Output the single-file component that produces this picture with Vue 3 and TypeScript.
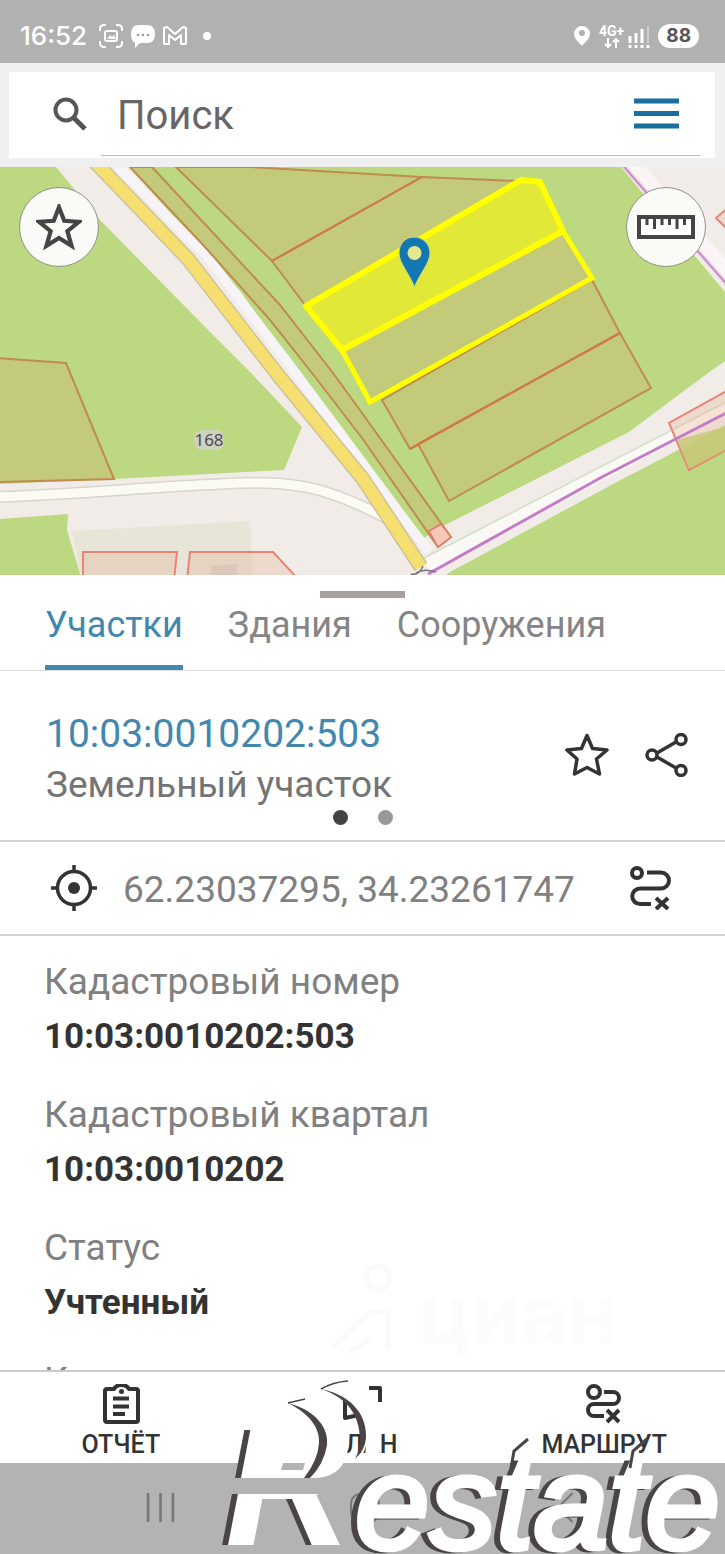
<script setup lang="ts">
import { ref } from 'vue'

interface Field {
  label: string
  value: string
}

const tabs: string[] = ['Участки', 'Здания', 'Сооружения']
const activeTab = ref(0)
const query = ref('')

const fields: Field[] = [
  { label: 'Кадастровый номер', value: '10:03:0010202:503' },
  { label: 'Кадастровый квартал', value: '10:03:0010202' },
  { label: 'Статус', value: 'Учтенный' },
  { label: 'Категория земель', value: '' },
]

const parcels: string[] = [
  '130,167 205,247 270,320 312,373 362,438 438,547 451,537 362,413 333,373 280,305 152,167',
  '176,167 272,261 422,177 250,167',
  '272,261 305,305 517,181 422,177',
  '382,400 410,449 620,333 592,280',
  '418,444 449,501 651,388 620,333',
  '-4,358 66,363 114,479 -4,482',
]

const redParcels: string[] = [
  '83,580 83,552 177,552 174,580',
  '187,580 190,552 273,552 299,580',
  '730,389 669,423 689,470 730,448',
  '730,206 716,218 730,232',
]
</script>

<template>
  <div class="screen">
    <header class="status">
      <div class="status-side">
        <span class="clock">16:52</span>
        <svg class="s24" viewBox="0 0 24 24" aria-hidden="true">
          <path d="M1 7V5q0-4 4-4h2M17 1h2q4 0 4 4v2M23 17v2q0 4-4 4h-2M7 23H5q-4 0-4-4v-2" fill="none" stroke="#fff" stroke-width="2" />
          <rect x="6" y="7" width="12" height="10" rx="2" fill="none" stroke="#fff" stroke-width="2" />
          <path d="M8 15l3-4 2 2 2-2 2 4z" fill="#fff" />
        </svg>
        <svg class="s24" viewBox="0 0 24 24" aria-hidden="true">
          <path d="M8 1h8q8 0 8 9t-8 9h-7l-5 5v-5q-4-2-4-9 0-9 8-9z" fill="#fff" />
          <g fill="#999"><circle cx="7" cy="11" r="1.300" /><circle cx="12" cy="11" r="1.300" /><circle cx="17" cy="11" r="1.300" /></g>
        </svg>
        <svg class="s24" viewBox="0 0 24 24" aria-hidden="true">
          <path d="M1 20V4l3-1 8 7 8-7 3 1v16h-5v-9l-6 5-6-5v9z" fill="none" stroke="#fff" stroke-width="2" stroke-linejoin="round" />
        </svg>
        <i class="more-dot"></i>
      </div>
      <div class="status-side status-right">
        <svg class="loc" viewBox="0 0 18 22" aria-hidden="true">
          <path d="M9 1a8 8 0 0 1 8 8c0 5-5 8-8 12C6 17 1 14 1 9a8 8 0 0 1 8-8z" fill="#fff" />
          <circle cx="9" cy="8" r="3" fill="#b1b1b1" />
        </svg>
        <span class="net">
          <b>4G+</b>
          <svg viewBox="0 0 16 10" aria-hidden="true"><path d="M4 0v9M1 6l3 3 3-3M12 10V1M9 4l3-3 3 3" fill="none" stroke="#fff" stroke-width="2" /></svg>
        </span>
        <svg class="bars" viewBox="0 0 22 24" aria-hidden="true">
          <path d="M2 12v7M8 9v10M14 5v14M2 21v3M8 21v3M14 21v3M20 21v3" stroke="#fff" stroke-width="3" />
          <path d="M20 2v17" stroke="#cfcfcf" stroke-width="2" />
        </svg>
        <span class="battery">88</span>
      </div>
    </header>

    <div class="search-wrap">
      <form class="search" role="search" @submit.prevent>
        <svg class="magnifier" viewBox="0 0 34 34" aria-hidden="true">
          <circle cx="13" cy="13" r="10.500" fill="none" stroke="#555" stroke-width="4" />
          <path d="M20.500 20.500L32 32" stroke="#555" stroke-width="5" />
        </svg>
        <div class="field-line">
          <input v-model="query" type="text" placeholder="Поиск" aria-label="Поиск" />
          <button type="button" class="plain" aria-label="Меню">
            <svg class="burger" viewBox="0 0 45 32" aria-hidden="true"><path d="M0 3h45M0 15.500h45M0 28h45" stroke="#1b6f9f" stroke-width="5" /></svg>
          </button>
        </div>
      </form>
    </div>

    <section class="map" aria-label="Карта">
      <svg class="map-canvas" viewBox="0 167 725 408" preserveAspectRatio="xMidYMid slice" aria-hidden="true">
        <rect x="-50" y="100" width="900" height="560" fill="#bcd981" />
        <path d="M0 484L115 479 284 470 302 427 253 375 213 335 100 220 56 167H129L205 251 240 291 300 375 362 458 424 538 445 525 629 432 712 370 730 358V423L615 483 450 572 440 580H82L67 530 68 514 0 519z" fill="#f1ece8" />
        <path d="M615 160L730 298V160z" fill="#f1ece8" />
        <path d="M72 531L250 521 253 580H82z" fill="#e7e4d8" />

        <path d="M424 558L730 400V412L429 574z" fill="#fbf9f6" />
        <path d="M424 558L730 400" stroke="#d2dec7" stroke-width="1.500" />
        <path d="M631 160L730 274" stroke="#fbf5f7" stroke-width="13" />
        <path d="M618 160L730 288" stroke="#ecc9e6" stroke-width="4" />
        <path d="M618 160L730 288" stroke="#bf85c4" stroke-width="1.500" />

        <path d="M-5 497C80 494 150 487 220 484C290 480 325 484 395 523" fill="none" stroke="#d8d5cd" stroke-width="12" />
        <path d="M-5 497C80 494 150 487 220 484C290 480 325 484 395 523" fill="none" stroke="#fcfbf3" stroke-width="9" />
        <path d="M118 167L206 255 290 365 429 552" fill="none" stroke="#f6f4f6" stroke-width="9" />
        <path d="M95 162L188 259 278 375 363 479 421 567" fill="none" stroke="#cfc29a" stroke-width="15" />
        <path d="M95 162L188 259 278 375 363 479 421 567" fill="none" stroke="#f5df70" stroke-width="12" />

        <g fill="#c3ca79" stroke="#c08a50" stroke-width="2">
          <polygon v-for="points in parcels" :key="points" :points="points" />
        </g>
        <path d="M272 261L422 177M410 449L620 333" stroke="#cf7a45" stroke-width="2" />
        <g fill="#e8a07c" fill-opacity="0.250" stroke="#e88474" stroke-width="2">
          <polygon v-for="points in redParcels" :key="points" :points="points" />
        </g>
        <path d="M677 440L689 469 728 449V426z" fill="#c5c876" fill-opacity="0.800" />
        <path d="M429 531L438 547 451 537 441 524z" fill="#f5c8ba" stroke="#e0776a" stroke-width="1.500" />
        <path d="M211 566l26-2v14h-26z" fill="#dcc7bb" />

        <polygon points="342,350 370,402 592,278 563,231" fill="#c3cb7b" stroke="#ff0" stroke-width="5" />
        <polygon points="306,306 521,180 540,182 563,231 342,350" fill="#e2e838" stroke="#ff0" stroke-width="6" stroke-linejoin="round" />

        <path d="M428 574L602 477 730 411" fill="none" stroke="#c37dc4" stroke-width="3" />
        <path d="M411 574q8 2 12-8M416 573q8-5 20-1" fill="none" stroke="#777" stroke-width="1.500" />

        <rect x="194" y="430" width="30" height="20" rx="8" fill="#cdd3bd" />
        <text x="209" y="446" class="house">168</text>

        <path d="M414 237c9 0 16 7 16 16 0 10-10 20-15.500 34C409 273 399 263 399 253c0-9 6-16 15-16z" fill="#1577b2" stroke="#cbdc7b" stroke-width="1" />
        <circle cx="414.500" cy="253" r="7" fill="#e2e98c" />
      </svg>
      <button type="button" class="round left" aria-label="Избранное">
        <svg viewBox="0 0 44 44" aria-hidden="true"><path d="M22 3L27 16 41 17 30 26 34 40 22 32.500 10 40 14 26 3 17 17 16z" fill="none" stroke="#454545" stroke-width="4" /></svg>
      </button>
      <button type="button" class="round right" aria-label="Измерить">
        <svg class="ruler" viewBox="0 0 58 24" aria-hidden="true">
          <rect x="2" y="2" width="54" height="20" fill="#fff" stroke="#454545" stroke-width="4" />
          <path d="M10 3v7M17.500 3v11M25 3v7M32.500 3v7M40 3v11M47.500 3v7" stroke="#454545" stroke-width="3" />
        </svg>
      </button>
    </section>

    <nav class="tabs" role="tablist">
      <i class="handle"></i>
      <button
        v-for="(tab, i) in tabs"
        :key="tab"
        type="button"
        role="tab"
        :aria-selected="i === activeTab"
        :class="['tab', { active: i === activeTab }]"
        @click="activeTab = i"
      >{{ tab }}</button>
    </nav>

    <section class="summary">
      <div class="summary-text">
        <a href="#parcel">10:03:0010202:503</a>
        <p>Земельный участок</p>
      </div>
      <button type="button" class="plain" aria-label="В избранное">
        <svg class="i44" viewBox="0 0 44 44" aria-hidden="true"><path d="M22 2.500L27.500 15.500 42 17 31.500 26 34.500 41 22 34.500 9.500 41 12 26 2 17 16.500 15.500z" fill="none" stroke="#333" stroke-width="3.500" stroke-linejoin="round" /></svg>
      </button>
      <button type="button" class="plain" aria-label="Поделиться">
        <svg class="i44" viewBox="0 0 44 44" aria-hidden="true">
          <path d="M12 20L31 9M12 24l19 11" stroke="#333" stroke-width="3.500" />
          <g fill="none" stroke="#333" stroke-width="3.500"><circle cx="7" cy="22" r="5" /><circle cx="36" cy="6.500" r="5" /><circle cx="36" cy="37.500" r="5" /></g>
        </svg>
      </button>
      <div class="dots"><i class="on"></i><i></i></div>
    </section>

    <section class="coords">
      <svg class="target" viewBox="0 0 46 46" aria-hidden="true">
        <circle cx="23" cy="23" r="16.500" fill="none" stroke="#333" stroke-width="3.500" />
        <circle cx="23" cy="23" r="6" fill="#333" />
        <path d="M23 0v7M23 39v7M0 23h7M39 23h7" stroke="#333" stroke-width="3.500" />
      </svg>
      <span>62.23037295, 34.23261747</span>
      <button type="button" class="plain" aria-label="Построить маршрут">
        <svg class="i44" viewBox="0 0 44 44" aria-hidden="true">
          <g fill="none" stroke="#333" stroke-width="4">
            <circle cx="8" cy="7" r="5" />
            <path d="M18 6.500h14a8 8 0 0 1 0 16H11a7.500 7.500 0 0 0 0 15.500h11" />
            <path d="M27 32l12 11M39 32L27 43" />
          </g>
        </svg>
      </button>
    </section>

    <main class="details">
      <dl>
        <div v-for="field in fields" :key="field.label" class="field">
          <dt>{{ field.label }}</dt>
          <dd>{{ field.value }}</dd>
        </div>
      </dl>
      <div class="cian" aria-hidden="true">
        <svg viewBox="0 0 80 100">
          <g fill="none" stroke="#fafafa" stroke-width="5"><circle cx="48" cy="16" r="12" /><path d="M2 86L40 50h18V88M20 90l20-14" /></g>
        </svg>
        <span>циан</span>
      </div>
    </main>

    <nav class="actions">
      <button type="button">
        <svg viewBox="0 0 40 40" aria-hidden="true">
          <path d="M13 5H6q-2 0-2 2v29q0 2 2 2h29q2 0 2-2V7q0-2-2-2h-7q-2-4-7.500-4T13 5z" fill="none" stroke="#333" stroke-width="4" stroke-linejoin="round" />
          <circle cx="20.500" cy="7.500" r="2.500" fill="#333" />
          <path d="M12 14.500h16M12 22.500h16M12 30h12" stroke="#333" stroke-width="4" />
        </svg>
        ОТЧЁТ
      </button>
      <button type="button">
        <svg viewBox="0 0 40 40" aria-hidden="true">
          <path d="M27 4h11v14M3 12v22l14-3V22L8 12" fill="none" stroke="#333" stroke-width="4" stroke-linejoin="round" />
        </svg>
        ПЛАН
      </button>
      <button type="button">
        <svg viewBox="0 0 40 40" aria-hidden="true">
          <g fill="none" stroke="#333" stroke-width="4">
            <circle cx="10" cy="8" r="6" />
            <path d="M20 8h9a6 6 0 0 1 0 12H10a6 6 0 0 0 0 12h10" />
            <path d="M23 26l12 12M35 26L23 38" />
          </g>
        </svg>
        МАРШРУТ
      </button>
    </nav>

    <footer class="system">
      <button type="button" aria-label="Недавние"><svg viewBox="0 0 30 30" aria-hidden="true"><path d="M3 1v28M15 1v28M27 1v28" stroke="#777" stroke-width="2.500" /></svg></button>
      <button type="button" aria-label="Домой"><svg viewBox="0 0 30 30" aria-hidden="true"><rect x="1" y="2" width="27" height="27" rx="9" fill="none" stroke="#777" stroke-width="2" /></svg></button>
      <button type="button" aria-label="Назад"><svg viewBox="0 0 30 30" aria-hidden="true"><path d="M17 1L3 15l14 14" fill="none" stroke="#777" stroke-width="2" /></svg></button>
    </footer>

    <svg class="watermark" viewBox="0 1374 725 180" role="img" aria-label="Restate">
      <defs>
        <clipPath id="legs">
          <rect x="200" y="1430" width="66" height="48" />
          <rect x="200" y="1494" width="180" height="60" />
        </clipPath>
      </defs>
      <g clip-path="url(#legs)" class="initial">
        <text x="219" y="1545" class="dark">R</text>
        <text x="225" y="1545" class="light">R</text>
      </g>
      <path d="M290 1402C330 1400 353 1425 347 1455Q340 1478 313 1478H247L261 1430z" fill="#fff" />
      <path d="M283 1463h22l-2 7h-22z" fill="#b3b3b3" />
      <path d="M349 1381C376 1392 386 1420 378 1462L364 1463C369 1440 366 1405 322 1389z" fill="#fff" />
      <path d="M288 1403C318 1411 329 1430 327 1445Q324 1464 310 1478H304Q318 1460 319 1443C320 1430 312 1415 288 1403z" fill="#4b4446" />
      <path d="M288 1403l17-4M321 1389q12-7 27-8" fill="none" stroke="#4b4446" stroke-width="1.500" />
      <path d="M321 1389C355 1396 367 1418 366 1438Q365 1450 355 1459Q360 1450 360 1438C359 1415 348 1398 321 1389z" fill="#4b4446" />
      <g class="letters">
        <text x="349" y="1550" class="dark">estate</text>
        <text x="355" y="1549" class="light">estate</text>
      </g>
      <path d="M511 1468l3-17 14-12M630 1468l3-17 14-12" fill="none" stroke="#4b4446" stroke-width="3" />
    </svg>
  </div>
</template>

<style>
body {
  margin: 0;
}
</style>

<style scoped>
.screen {
  position: relative;
  display: flex;
  flex-direction: column;
  height: 100vh;
  overflow: hidden;
  background: #fff;
  color: #333;
  font-family: Roboto, "Liberation Sans", sans-serif;
}
button {
  margin: 0;
  padding: 0;
  border: 0;
  background: none;
  font: inherit;
  color: inherit;
  cursor: pointer;
}
svg {
  display: block;
}
.plain {
  flex: none;
}
.status {
  flex: none;
  display: flex;
  justify-content: space-between;
  padding: 8px 26px 0 20px;
  height: 55px;
  background: #b1b1b1;
  color: #fff;
}
.status-side {
  display: flex;
  align-items: center;
  gap: 8px;
}
.clock {
  margin-right: 4px;
  font: 500 26px/30px Inter, sans-serif;
}
.s24 {
  width: 24px;
  height: 24px;
}
.more-dot {
  width: 8px;
  height: 8px;
  margin-left: 8px;
  border-radius: 50%;
  background: #fff;
}
.loc {
  width: 18px;
  height: 22px;
}
.net {
  display: flex;
  flex-direction: column;
  align-items: center;
  font-size: 14px;
  line-height: 14px;
}
.net svg {
  width: 16px;
  height: 10px;
}
.bars {
  width: 22px;
  height: 24px;
  margin-left: -4px;
}
.status-right {
  gap: 8px;
}
.battery {
  padding: 0 8px;
  border-radius: 12px;
  background: #fff;
  color: #555;
  font: 700 19px/24px Inter, sans-serif;
}
.search-wrap {
  flex: none;
  padding: 9px 10px 9px 9px;
  background: #f0f0f0;
}
.search {
  display: flex;
  align-items: center;
  padding: 0 15px 2px 44px;
  background: #fff;
}
.magnifier {
  flex: none;
  width: 34px;
  height: 34px;
  margin-right: 14px;
}
.field-line {
  flex: 1;
  display: flex;
  align-items: center;
  min-width: 0;
  height: 83px;
  padding-right: 21px;
  border-bottom: 1px solid #bbb;
}
input {
  flex: 1;
  min-width: 0;
  padding: 4px 0 0 16px;
  border: 0;
  outline: 0;
  background: none;
  color: #666;
  font: 40px/48px Roboto, sans-serif;
}
input::placeholder {
  color: #666;
  opacity: 1;
}
.burger {
  width: 45px;
  height: 32px;
}
.map {
  flex: none;
  position: relative;
  height: 408px;
  overflow: hidden;
}
.map-canvas {
  width: 100%;
  height: 100%;
}
.house {
  font: 17px "Noto Sans", sans-serif;
  fill: #4f4a5c;
  text-anchor: middle;
}
.round {
  position: absolute;
  top: 20px;
  display: grid;
  place-items: center;
  box-sizing: border-box;
  width: 80px;
  height: 80px;
  border: 1px solid #8d9488;
  border-radius: 50%;
  background: #fafaf7;
}
.round svg {
  width: 46px;
  height: 46px;
}
.round .ruler {
  width: 58px;
  height: 24px;
}
.left {
  left: 19px;
}
.right {
  right: 19px;
}
.tabs {
  flex: none;
  position: relative;
  display: flex;
  gap: 45px;
  padding: 0 45px;
  border-bottom: 1px solid #ddd;
}
.handle {
  position: absolute;
  top: 16px;
  left: 50%;
  width: 85px;
  height: 7px;
  margin-left: -43px;
  background: #a7a29f;
}
.tab {
  padding: 29px 0 18px;
  border-bottom: 5px solid transparent;
  color: #858585;
  font-size: 36px;
  line-height: 43px;
}
.tab.active {
  border-color: #4287ae;
  color: #4287ae;
}
.summary {
  flex: none;
  position: relative;
  display: flex;
  align-items: flex-start;
  gap: 36px;
  padding: 37px 36px 31px 46px;
  border-bottom: 2px solid #d4d4d4;
}
.summary .plain {
  margin-top: 25px;
}
.summary-text {
  flex: 1;
}
.summary a {
  color: #4287ae;
  font-size: 39px;
  line-height: 52px;
  text-decoration: none;
}
.summary p {
  margin: 0;
  color: #747474;
  font-size: 37px;
  line-height: 49px;
}
.i44 {
  width: 44px;
  height: 44px;
}
.dots {
  position: absolute;
  bottom: 15px;
  left: 50%;
  display: flex;
  gap: 30px;
  transform: translateX(-50%);
}
.dots i {
  width: 15px;
  height: 15px;
  border-radius: 50%;
  background: #999;
}
.dots .on {
  background: #444;
}
.coords {
  flex: none;
  display: flex;
  align-items: center;
  padding: 23px 52px 23px 51px;
  border-bottom: 2px solid #d4d4d4;
  color: #808080;
  font-size: 37px;
  line-height: 46px;
}
.target {
  flex: none;
  width: 46px;
  height: 46px;
  margin-right: 26px;
}
.coords span {
  flex: 1;
  padding-top: 3px;
  line-height: 43px;
}
.details {
  flex: 1;
  position: relative;
  min-height: 0;
  overflow: hidden;
  padding: 0 44px;
}
dl {
  margin: 0;
}
.field {
  padding-top: 23px;
}
dt {
  color: #808080;
  font-size: 37px;
  line-height: 46px;
}
dd {
  margin: 0;
  padding: 10px 0;
  min-height: 44px;
  color: #333;
  font-size: 35px;
  font-weight: 700;
  line-height: 44px;
}
.cian {
  position: absolute;
  right: 108px;
  bottom: 8px;
  display: flex;
  align-items: flex-end;
  gap: 8px;
  color: #fcfcfc;
  font: 700 80px/96px Inter, sans-serif;
}
.cian svg {
  width: 80px;
  height: 100px;
}
.actions {
  flex: none;
  display: grid;
  grid-template-columns: repeat(3, 1fr);
  border-top: 2px solid #ccc;
}
.actions button {
  display: flex;
  flex-direction: column;
  align-items: center;
  gap: 5px;
  padding: 12px 0 2px;
  font-size: 25px;
  font-weight: 500;
  line-height: 32px;
}
.actions svg {
  width: 40px;
  height: 40px;
}
.system {
  flex: none;
  display: flex;
  justify-content: center;
  gap: 174px;
  padding: 29px 0 31px 5px;
  background: #b3b3b3;
}
.system svg {
  width: 31px;
  height: 31px;
}
.watermark {
  position: absolute;
  right: 0;
  bottom: 0;
  width: 100%;
  pointer-events: none;
}
.initial {
  font: italic 700 176px "Liberation Sans", sans-serif;
}
.letters {
  font: italic 400 134px "Liberation Sans", sans-serif;
}
.dark {
  fill: #4b4446;
}
.light {
  fill: #fff;
}
.letters .dark {
  stroke: #4b4446;
  stroke-width: 5px;
}
.letters .light {
  stroke: #fff;
  stroke-width: 5px;
}
</style>
